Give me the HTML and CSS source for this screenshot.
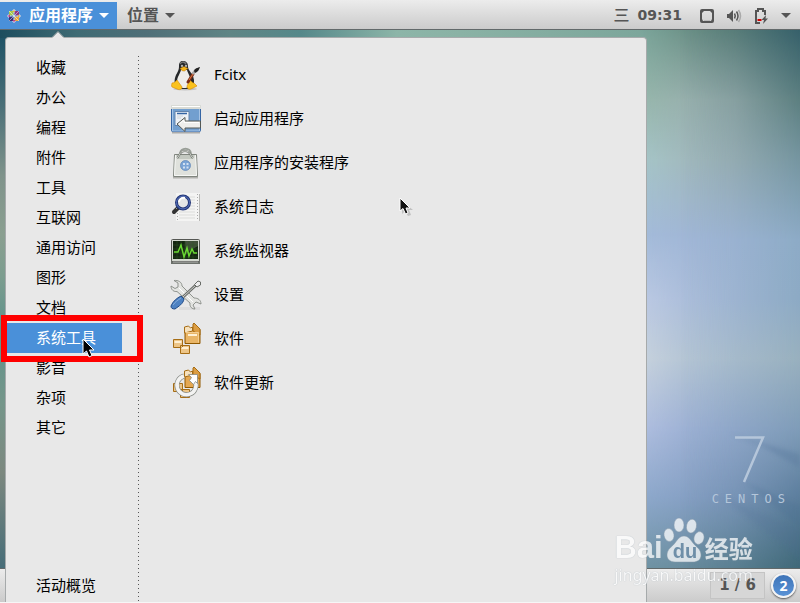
FILE: index.html
```html
<!DOCTYPE html>
<html lang="zh-CN">
   <head>
      <meta charset="UTF-8">
      <meta name="viewport" content="width=device-width, initial-scale=1.0">
      <title>应用程序</title>
      <link rel="stylesheet" href="styles.css">
   </head>
   <body>
      <header class="topbar">
         <button type="button" class="top-btn active">
            <svg class="distro" width="14" height="14" viewBox="0 0 14 14">
               <path d="M7 0l2 2-2 2-2-2zM14 7l-2 2-2-2 2-2zM7 14l-2-2 2-2 2 2zM0 7l2-2 2 2-2 2z" fill="#e9e2f2"/>
               <path d="M2 2h4.500v4.500H2z" fill="#a5c84a"/>
               <path d="M7.500 2H12v4.500H7.500z" fill="#8d3480"/>
               <path d="M2 7.500h4.500V12H2z" fill="#3b3275"/>
               <path d="M7.500 7.500H12V12H7.500z" fill="#eda63a"/>
               <path d="M2 2l10 10M12 2L2 12M7 1v12M1 7h12" stroke="#fff" stroke-width=".5"/>
               <path d="M7 .5L8.500 3h-3zM13.500 7L11 8.500v-3z" fill="#d8b04c"/>
               <path d="M7 13.500L5.500 11h3zM.5 7L3 5.500v3z" fill="#b6458f"/>
            </svg>
            <span>应用程序</span>
            <svg width="10" height="5" viewBox="0 0 10 5"><path d="M0 0h10L5 5z" fill="currentColor"/></svg>
         </button>
         <button type="button" class="top-btn">
            <span>位置</span>
            <svg width="10" height="5" viewBox="0 0 10 5"><path d="M0 0h10L5 5z" fill="currentColor"/></svg>
         </button>
         <div class="tray">
            <button type="button" class="clock">三 <span class="time">09:31</span></button>
            <button type="button" class="status" aria-label="系统状态">
               <svg width="14" height="14" viewBox="0 0 14 14">
                  <rect x="1" y="1" width="12" height="12" rx="1" fill="none" stroke="#555" stroke-width="2"/>
                  <path d="M2 2h2L2 4zM12 2h-2l2 2zM2 12v-2l1 2zM12 12v-2l-1 2z" fill="#555"/>
                  <path d="M4 11.500h6" stroke="#bbb"/>
               </svg>
               <svg width="16" height="14" viewBox="0 0 16 14">
                  <path d="M1 5h2l4-4v12L3 9H1z" fill="#555"/>
                  <path d="M8.500 4.500q1.500 2.500 0 5M10.500 2.500q3 4.500 0 9" fill="none" stroke="#555" stroke-width="1.500"/>
                  <path d="M12.500 1q4 6 0 12" fill="none" stroke="#aaa" stroke-width="1.500"/>
               </svg>
               <svg width="15" height="16" viewBox="0 0 15 16">
                  <path d="M6 15H2V3h2V1h5v2h2v4" fill="none" stroke="#555" stroke-width="2"/>
                  <path d="M3.500 11h4v2h-4z" fill="#d40000"/>
                  <path d="M12 7L7.500 12H10l-1 4 5-5.500h-2.500z" fill="#555"/>
               </svg>
               <svg width="10" height="5" viewBox="0 0 10 5"><path d="M0 0h10L5 5z" fill="#555"/></svg>
            </button>
         </div>
      </header>

      <main class="desktop">
         <div class="wall wall-mid"></div>
         <div class="wall wall-right"></div>
         <div class="wall wall-top"></div>
         <div class="wall wall-edge"></div>
         <svg class="rays" width="150" height="140" viewBox="0 0 150 140">
            <path d="M80 6L150 26v14L112 18z" fill="#55759c" opacity=".35"/>
            <path d="M95 54l55 24v22z" fill="#4b6d92" opacity=".22"/>
            <path d="M70 68l80 34v28z" fill="#4b6d92" opacity=".14"/>
         </svg>
         <div class="brand">
            <svg width="32" height="48" viewBox="0 0 32 48"><path d="M0 1.500h28L9 46" fill="none" stroke="#b5c6da" stroke-width="2.500"/></svg>
            <span>CENTOS</span>
         </div>
      </main>

      <footer class="taskbar">
         <button type="button" class="workspace">1 / 6</button>
         <button type="button" class="notify">2</button>
      </footer>

      <section class="menu">
         <svg class="menu-tip" width="12" height="7" viewBox="0 0 12 7"><path d="M0 7l6-6 6 6z" fill="#e8e8e8"/><path d="M0 6.500l6-6 6 6" fill="none" stroke="#a6aaab"/></svg>
         <nav class="categories">
            <button type="button">收藏</button>
            <button type="button">办公</button>
            <button type="button">编程</button>
            <button type="button">附件</button>
            <button type="button">工具</button>
            <button type="button">互联网</button>
            <button type="button">通用访问</button>
            <button type="button">图形</button>
            <button type="button">文档</button>
            <div class="current">
               <button type="button" class="selected">系统工具</button>
               <div class="frame"></div>
               <svg class="pointer" width="16" height="22" viewBox="0 0 16 22"><path d="M1 1v15l3.500-3L7 19l3-1.500L7.500 12H12z" fill="#000" stroke="#fff"/></svg>
            </div>
            <button type="button">影音</button>
            <button type="button">杂项</button>
            <button type="button">其它</button>
            <button type="button" class="overview">活动概览</button>
         </nav>
         <div class="divider"></div>
         <div class="apps">
            <button type="button">
               <svg width="32" height="32" viewBox="0 0 32 32">
                  <ellipse cx="15" cy="30" rx="12" ry="1.500" fill="#aaa" opacity=".6"/>
                  <path d="M13 2c-3 0-4 2-4 5 0 4-1 5-3 9-2 5-2 9 1 12l5 2h6l5-3c2-4 1-8-1-12-3-4-4-5-4-8 0-3-2-5-5-5z" fill="#26282a"/>
                  <path d="M10 5c1-2 4-3 6 0" fill="none" stroke="#777" stroke-width="1.500"/>
                  <path d="M11 11c-1 4-4 7-4 12 1 4 4 6 7 6 4 0 7-2 7-6 0-5-3-8-4-12z" fill="#eeede9"/>
                  <circle cx="12" cy="7" r="1.200" fill="#ddd"/><circle cx="16" cy="7" r="1.200" fill="#ddd"/>
                  <circle cx="12" cy="7" r=".6"/><circle cx="16" cy="7" r=".6"/>
                  <path d="M10 9.500l4-2 4 2-3.500 2.500h-2z" fill="#f6b51d" stroke="#a66a00" stroke-width=".4"/>
                  <path d="M7 21l5 7c0 3-3 3-5 2l-5-2c-1-1 0-3 0-4 2 0 3-1 5-3zM20 21c2 3 3 2 5 4l2 2-6 3c-3 1-4-1-4-3z" fill="#fac21d" stroke="#d78a00" stroke-width=".6"/>
                  <path d="M18 23l5-8" stroke="#7a2c16" stroke-width="3" stroke-linecap="round"/>
                  <path d="M19 21l4-6" stroke="#dc7943"/>
                  <path d="M22.500 15l3-4" stroke="#aaa" stroke-width="2.500"/>
                  <path d="M24 12c1-3 3-3 6-4-1 3-2 5-5 6z" fill="#222"/>
               </svg>
               <span>Fcitx</span>
            </button>
            <button type="button">
               <svg width="32" height="32" viewBox="0 0 32 32">
                  <path d="M2 29.500h28" stroke="#aaa" stroke-width="2"/>
                  <rect x="1.500" y="2.500" width="29" height="26" rx="1" fill="#729fcf" stroke="#3465a4"/>
                  <path d="M1 2h30v4H1z" fill="#d9dbd6"/><path d="M2 3.500h28" stroke="#fff"/>
                  <path d="M2.500 6v22h27V6" fill="none" stroke="#a5c3e5"/>
                  <path d="M5 8.500h14v14H5z" fill="#eef2f7" stroke="#6485ae"/>
                  <path d="M7 10.500h10" stroke="#3465a4" stroke-width="1.500"/><path d="M7 13h6M7 15h4" stroke="#ccd2d9"/>
                  <path d="M7 21l8-6.500v3.500h15.500v7H15v3.500z" fill="#eeeeec" stroke="#555954"/>
                  <path d="M9 21l5-4v2.500h15" fill="none" stroke="#fff"/>
               </svg>
               <span>启动应用程序</span>
            </button>
            <button type="button">
               <svg width="32" height="32" viewBox="0 0 32 32">
                  <path d="M3 30.500h25" stroke="#b0b0ad" stroke-width="2"/>
                  <path d="M10 7c0-7 11-7 11 0" fill="none" stroke="#9a9f98" stroke-width="2"/>
                  <path d="M4.500 7.500h22l1 22h-24z" fill="#dfe1dc" stroke="#80857e"/>
                  <path d="M5.500 8.500h20l1 20h-22z" fill="none" stroke="#f6f7f5"/>
                  <path d="M6 8h19l-2 4H8z" fill="#c3c8c0"/>
                  <path d="M7 11c3-2 2-7 8-7s5 5 8 7" fill="none" stroke="#777c75" stroke-width="2"/>
                  <path d="M7 11c3-2 2-7 8-7s5 5 8 7" fill="none" stroke="#dfe2dd" stroke-width=".8"/>
                  <circle cx="15.500" cy="18.500" r="5" fill="#7ba5d6" stroke="#5c83b5" stroke-width=".7"/>
                  <path d="M13 16h2v2h-2zM16.500 16h2v2h-2zM13 19.500h2v2h-2zM16.500 19.500h2v2h-2z" fill="#d1e0f1"/>
               </svg>
               <span>应用程序的安装程序</span>
            </button>
            <button type="button">
               <svg width="32" height="32" viewBox="0 0 32 32">
                  <path d="M6 2h24v28H6z" fill="#f4f4f3"/><path d="M29.500 3v27" stroke="#b9b9b7"/>
                  <path d="M9 6h16M9 9h16M9 12h16M9 15h16M9 18h16M9 21h16M9 24h16M9 27h16" stroke="#dcdddb"/>
                  <path d="M27.500 3v26M7.500 22v7" stroke="#aaa" stroke-dasharray="1 2"/>
                  <path d="M9 16l-5 5" stroke="#333" stroke-width="4" stroke-linecap="round"/>
                  <path d="M9 15l-3 3" stroke="#999"/>
                  <circle cx="13" cy="11.500" r="6.500" fill="#e5e6e6" stroke="#243778" stroke-width="3"/>
                  <circle cx="13" cy="11.500" r="6.500" fill="none" stroke="#5772bd"/>
                  <path d="M9 11c0-3 3-5 6-4" fill="none" stroke="#fff" stroke-width="2"/>
               </svg>
               <span>系统日志</span>
            </button>
            <button type="button">
               <svg width="32" height="32" viewBox="0 0 32 32">
                  <path d="M1 25h29v4H1z" fill="#6c706b"/>
                  <rect x="1.500" y="4.500" width="28" height="22" rx="1" fill="#d3d7cf" stroke="#555753"/>
                  <path d="M3 6h25v18H3z" fill="#142611"/>
                  <path d="M15 6h13v5c-6 4-9 3-12 9z" fill="#52614c" opacity=".7"/>
                  <path d="M3 10h25M3 14h25M3 18h25M3 22h25M7 6v18M11 6v18M15 6v18M19 6v18M23 6v18" stroke="#2d5524" stroke-width=".5"/>
                  <path d="M4 17h4l3-7 3 12 3-9 2 8 3-7 2 4h3" fill="none" stroke="#69d832" stroke-width="1.500"/>
                  <path d="M3 27h25" stroke="#fff" stroke-width=".5"/>
               </svg>
               <span>系统监视器</span>
            </button>
            <button type="button">
               <svg width="32" height="32" viewBox="0 0 32 32">
                  <path d="M9 29.500h21" stroke="#ddd" stroke-width="3"/>
                  <path d="M4 1.500l4 2.500v4L5 9.500 1 7c0 4 3 6 6 5.500L20 24c-.5 4 2 6 5 6l-2-4 3-3 5 2c0-4-3-6-7-6L12 7c0-4-4-6-8-5.500z" fill="#e3e4e1" stroke="#858983" stroke-width=".9"/>
                  <path d="M9 9l14 14" stroke="#fff"/>
                  <path d="M13 18L26 6" stroke="#696c68" stroke-width="3"/><path d="M13 18L26 6" stroke="#d3d5d1"/>
                  <path d="M24.500 5.500L28 2l2.500 1v3L27 8z" fill="#eee" stroke="#696c68"/>
                  <path d="M11 17l3 3c-1 5-5 7-9 10-3 0-4-1-4-3 2-5 6-8 10-10z" fill="#4e82c2" stroke="#204a87"/>
                  <path d="M11 19c-3 2-6 4-8 7" fill="none" stroke="#92b6e1" stroke-width=".8"/>
               </svg>
               <span>设置</span>
            </button>
            <button type="button">
               <svg width="32" height="32" viewBox="0 0 32 32">
                  <path d="M15 20.500h15v-14H15z" fill="#e4a751" stroke="#8f5902"/>
                  <path d="M14.500 10V4l4-1 2 2 2-1v4z" fill="#f6e1bd" stroke="#a66d15"/>
                  <path d="M23 8V1l1-1 6 6v6z" fill="#dc9d42" stroke="#a66d15"/>
                  <path d="M16 9h13v11H16z" fill="#e9b566"/><path d="M15.500 9.500h13v10" fill="none" stroke="#f3cd90"/>
                  <path d="M18 12h9" stroke="#fff1d4" stroke-width="2"/>
                  <path d="M3.500 16.500h9v8h-9zM10.500 22.500h9v8h-9z" fill="#edc587" stroke="#a66d15"/>
                  <path d="M4.500 19h7M11.500 25h7" stroke="#fff0d2" stroke-width="2"/>
               </svg>
               <span>软件</span>
            </button>
            <button type="button">
               <svg width="32" height="32" viewBox="0 0 32 32">
                  <path d="M15 20.500h15v-14H15z" fill="#e4a751" stroke="#8f5902"/>
                  <path d="M14.500 10V4l4-1 2 2 2-1v4z" fill="#f6e1bd" stroke="#a66d15"/>
                  <path d="M23 8V1l1-1 6 6v6z" fill="#dc9d42" stroke="#a66d15"/>
                  <path d="M3.500 16.500h9v8h-9zM10.500 22.500h9v8h-9z" fill="#edc587" stroke="#a66d15"/>
                  <path d="M14 9a9.500 9.500 0 1 0 11 5" fill="none" stroke="#858984" stroke-width="5"/>
                  <path d="M14 9a9.500 9.500 0 1 0 11 5" fill="none" stroke="#f3f3f2" stroke-width="3.600"/>
                  <path d="M18.500 7.500h9v9l-2-2-2 3-4-4 2-3z" fill="#fff" stroke="#858984" stroke-width=".8"/>
               </svg>
               <span>软件更新</span>
            </button>
         </div>
         <svg class="pointer pointer-small" width="16" height="22" viewBox="0 0 16 22"><path d="M3 4v13l3-3 3 5 3-1-2-5h4z" fill="#999" opacity=".5"/><path d="M1 1v13l3-2.500L6.500 17l2.500-1-2-5h4z" fill="#111" stroke="#fff"/></svg>
      </section>

      <div class="watermark">
         <div class="mark-row">
            <span class="mark-bai">Bai</span>
            <span class="paw">
               <svg width="42" height="46" viewBox="0 0 42 46">
                  <g fill="#fff" stroke="#8b9ba8" stroke-width=".5">
                     <ellipse cx="6" cy="18" rx="5" ry="6.500" transform="rotate(-10 6 18)"/>
                     <ellipse cx="16" cy="8" rx="5" ry="7"/>
                     <ellipse cx="28.500" cy="9" rx="5" ry="7" transform="rotate(12 28 9)"/>
                     <ellipse cx="36" cy="21" rx="5" ry="6.500" transform="rotate(15 36 21)"/>
                     <path d="M21 19c4 0 6 3 9 7s8 6 8 12c0 5-4 7-8 7H12c-5 0-8-3-8-7 0-6 5-8 8-12s5-7 9-7z"/>
                  </g>
               </svg>
               <b>du</b>
            </span>
            <span class="mark-cn">经验</span>
         </div>
         <div class="mark-url">jingyan.baidu.com</div>
      </div>
   </body>
</html>
```
FILE: styles.css
```css
* { box-sizing: border-box; }
body { position: relative; display: flex; flex-direction: column; height: 100vh; margin: 0; padding-bottom: 1px; overflow: hidden; background: #f6f6f6; font-family: "Noto Sans", "Noto Sans CJK SC", sans-serif; font-size: 15px; color: #000; }
button { margin: 0; padding: 0; border: none; background: none; font: inherit; color: inherit; text-align: left; cursor: pointer; }
svg { display: block; flex: none; }

/* top panel */
.topbar { display: flex; height: 30px; padding-top: 2px; border-bottom: 1px solid #62696a; background: linear-gradient(#ececec, #cbcbcb); color: #555; }
.top-btn { display: flex; align-items: center; gap: 6px; padding: 0 10px; font-size: 16px; line-height: 24px; font-weight: 700; }
.top-btn span { padding-bottom: 2px; }
.top-btn.active { padding: 0 8px 0 7px; background: #4a90d9; color: #fff; }
.distro { margin-right: 2px; }
.tray { display: flex; align-items: center; gap: 18px; margin-left: auto; padding-right: 9px; }
.clock { display: flex; align-items: center; gap: 8px; padding-bottom: 2px; font-size: 16px; line-height: 24px; font-weight: 500; }
.time { font-family: "DejaVu Sans", sans-serif; font-size: 14px; font-weight: 700; }
.status { display: flex; align-items: center; gap: 12px; }

/* wallpaper */
.desktop { position: relative; flex: 1; overflow: hidden; background: linear-gradient(#7ca69b 0%, #97b7ac 13%, #a6c6c8 24%, #a4bbda 38%, #bccae4 50%, #c8d3de 61%, #b0bfe0 74%, #8ea9cc 87%, #7094a4 100%); }
.wall { position: absolute; inset: 0; }
.wall-mid { background: linear-gradient(#66887f 0%, #98adae 13%, #9fb3b8 24%, #9fb5d5 39%, #a4b8d6 50%, #abbed0 61%, #95abcf 74%, #829cc0 87%, #66899c 100%); -webkit-mask-image: linear-gradient(90deg, transparent 80%, rgba(0,0,0,.7) 86%, #000 92%); mask-image: linear-gradient(90deg, transparent 80%, rgba(0,0,0,.7) 86%, #000 92%); }
.wall-right { background: linear-gradient(#36606a 0%, #5c7f80 13%, #7595a0 24%, #8dabc6 39%, #8caac4 50%, #98b0be 61%, #7f9cb8 74%, #5b7d9c 87%, #3f6878 100%); -webkit-mask-image: linear-gradient(90deg, transparent 85%, rgba(0,0,0,.3) 92%, #000 100%); mask-image: linear-gradient(90deg, transparent 85%, rgba(0,0,0,.3) 92%, #000 100%); }
.wall-top { bottom: auto; right: 20%; height: 8px; background: linear-gradient(90deg, #1d4d5e, #3f6b74 12%, #4f6f78 23%, #5f8585 36%, #55888a 47%, #8cb5a8 62%, #8ab2a5 72%, #7ca69b); }
.wall-edge { top: 8px; right: auto; width: 6px; background: linear-gradient(#1f5366, #4b7078 13%, #7f938b 26%, #8a9f90 37%, #7c9d8f 45%, #5f928b 55%, #75968a 69%, #7c887f 82%, #476d78); }
.rays { position: absolute; right: 0; bottom: 0; filter: blur(2px); }
.brand { position: absolute; right: 9px; bottom: 60px; display: flex; flex-direction: column; align-items: center; gap: 6px; color: #b5c6da; }
.brand span { font-family: "DejaVu Sans Mono", monospace; font-size: 12px; line-height: 18px; letter-spacing: 6px; }

/* bottom panel */
.taskbar { display: flex; align-items: center; justify-content: flex-end; gap: 6px; height: 34px; padding-right: 4px; border-top: 1px solid #62696a; background: linear-gradient(#ececec, #cbcbcb); color: #555; }
.workspace { padding: 0 8px; border: 1px solid #c4c4c4; background: #d6d6d6; font-family: "DejaVu Sans", sans-serif; font-size: 15px; line-height: 25px; font-weight: 700; }
.notify { width: 25px; height: 25px; border: 2px solid #f4f4f4; border-radius: 50%; background: linear-gradient(#3e74b8, #5a93d6); box-shadow: 0 1px 2px #555; color: #fff; font-size: 14px; line-height: 20px; font-weight: 700; text-align: center; }

/* applications menu */
.menu { position: absolute; top: 37px; bottom: 1px; left: 5px; right: 153px; display: flex; padding-top: 15px; border: 1px solid #a6aaab; border-bottom: none; border-radius: 4px 4px 0 0; background: #e8e8e8; }
.menu-tip { position: absolute; top: -7px; left: 46px; }
.categories { display: flex; flex-direction: column; width: 116px; margin-right: 16px; padding-bottom: 1px; }
.categories button { width: 100%; padding: 0 0 2px 30px; line-height: 28px; }
.current { position: relative; }
.categories .selected { background: #4a90d9; color: #fff; }
.categories .overview { margin-top: auto; }
.frame { position: absolute; top: -8px; left: -5px; width: 142px; height: 47px; border: 6px solid #f00; }
.pointer { position: absolute; top: 15px; left: 76px; }
.pointer-small { top: 159px; left: 393px; }
.divider { width: 1px; margin-top: 3px; background: repeating-linear-gradient(#555 0 1px, transparent 1px 4px); }
.apps { flex: 1; padding-left: 31px; }
.apps button { display: flex; align-items: center; gap: 12px; width: 100%; line-height: 42px; }
.apps span { padding-bottom: 2px; }

/* site mark */
.watermark { position: absolute; right: 47px; bottom: 18px; color: #fff; opacity: .75; text-shadow: 0 0 1px #8b9ba8; }
.mark-row { display: flex; align-items: flex-end; margin-bottom: 2px; }
.mark-bai { font-family: "Liberation Sans", sans-serif; font-size: 31px; line-height: 30px; font-weight: 700; }
.paw { position: relative; }
.paw b { position: absolute; left: 10px; bottom: 2px; font-family: "Liberation Sans", sans-serif; font-size: 20px; line-height: 20px; color: #6f8fa9; text-shadow: none; }
.mark-cn { font-size: 24px; line-height: 28px; font-weight: 700; }
.mark-url { font-size: 16px; line-height: 20px; }
```
